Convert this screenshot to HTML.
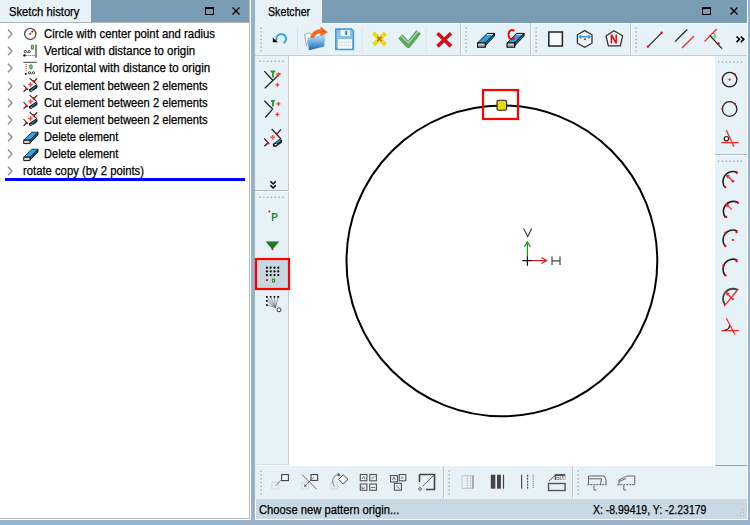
<!DOCTYPE html>
<html><head><meta charset="utf-8">
<style>
*{margin:0;padding:0;box-sizing:border-box}
html,body{width:750px;height:525px;overflow:hidden;background:#96b3c9;font-family:"Liberation Sans",sans-serif;font-size:12px;color:#000}
.a{position:absolute}
.tr{transform:scaleX(0.95)}
.t{position:absolute;white-space:nowrap;transform-origin:0 0;line-height:14px;-webkit-text-stroke:0.25px #000}
svg{position:absolute;overflow:visible}
</style></head><body>

<!-- LEFT PANEL -->
<div class="a" style="left:0;top:0;width:251px;height:520px;background:#fbfdfe"></div>
<div class="a" style="left:0;top:0;width:250px;height:519px;background:#fff;border-right:1px solid #bdb9ba;border-bottom:1px solid #bdb9ba"></div>
<div class="a" style="left:0;top:0;width:249px;height:23px;background:#7a9db5"></div>
<div class="a" style="left:0;top:0;width:91px;height:23px;background:#e6f1f8"></div>
<div class="a" style="left:0;top:22px;width:249px;height:1px;background:#a9b4bb"></div>
<div class="t" style="left:9px;top:5px;transform:scaleX(0.935)">Sketch history</div>
<!-- max / close -->
<div class="a" style="left:205px;top:7px;width:9px;height:8px;border:1px solid #000;border-top-width:2px"></div>
<svg style="left:232px;top:7px" width="8" height="8"><path d="M0.5 0.5L7.5 7.5M7.5 0.5L0.5 7.5" stroke="#000" stroke-width="1.3"/></svg>

<!-- tree -->
<svg style="left:7px;top:29.0px" width="6" height="10"><path d="M1 0.8L5 5L1 9.2" fill="none" stroke="#8a8a8a" stroke-width="1.3"/></svg>
<div class="t" style="left:44px;top:27.0px;transform:scaleX(0.946)">Circle with center point and radius</div>
<svg style="left:7px;top:46.2px" width="6" height="10"><path d="M1 0.8L5 5L1 9.2" fill="none" stroke="#8a8a8a" stroke-width="1.3"/></svg>
<div class="t" style="left:44px;top:44.2px;transform:scaleX(0.956)">Vertical with distance to origin</div>
<svg style="left:7px;top:63.3px" width="6" height="10"><path d="M1 0.8L5 5L1 9.2" fill="none" stroke="#8a8a8a" stroke-width="1.3"/></svg>
<div class="t" style="left:44px;top:61.3px;transform:scaleX(0.962)">Horizontal with distance to origin</div>
<svg style="left:7px;top:80.5px" width="6" height="10"><path d="M1 0.8L5 5L1 9.2" fill="none" stroke="#8a8a8a" stroke-width="1.3"/></svg>
<div class="t" style="left:44px;top:78.5px;transform:scaleX(0.933)">Cut element between 2 elements</div>
<svg style="left:7px;top:97.7px" width="6" height="10"><path d="M1 0.8L5 5L1 9.2" fill="none" stroke="#8a8a8a" stroke-width="1.3"/></svg>
<div class="t" style="left:44px;top:95.7px;transform:scaleX(0.933)">Cut element between 2 elements</div>
<svg style="left:7px;top:114.9px" width="6" height="10"><path d="M1 0.8L5 5L1 9.2" fill="none" stroke="#8a8a8a" stroke-width="1.3"/></svg>
<div class="t" style="left:44px;top:112.9px;transform:scaleX(0.933)">Cut element between 2 elements</div>
<svg style="left:7px;top:132.0px" width="6" height="10"><path d="M1 0.8L5 5L1 9.2" fill="none" stroke="#8a8a8a" stroke-width="1.3"/></svg>
<div class="t" style="left:44px;top:130.0px;transform:scaleX(0.921)">Delete element</div>
<svg style="left:7px;top:149.2px" width="6" height="10"><path d="M1 0.8L5 5L1 9.2" fill="none" stroke="#8a8a8a" stroke-width="1.3"/></svg>
<div class="t" style="left:44px;top:147.2px;transform:scaleX(0.921)">Delete element</div>
<svg style="left:7px;top:166.4px" width="6" height="10"><path d="M1 0.8L5 5L1 9.2" fill="none" stroke="#8a8a8a" stroke-width="1.3"/></svg>
<div class="t" style="left:23px;top:164.4px;transform:scaleX(0.940)">rotate copy (by 2 points)</div>
<svg style="left:22px;top:26px" width="16" height="16"><circle cx="8.3" cy="7.9" r="5.6" fill="none" stroke="#4a4a4a" stroke-width="1.3"/><path d="M7.5 8.5L12.3 3.6" stroke="#f00" stroke-width="1.6" stroke-dasharray="2 1"/></svg>
<svg style="left:22px;top:43px" width="16" height="16"><path d="M14 1.4V14.8" stroke="#777" stroke-width="1.7"/><ellipse cx="10.4" cy="4.2" rx="1.0" ry="1.9" fill="none" stroke="#2ea02e" stroke-width="1.4"/><circle cx="3.3" cy="8.6" r="1.1" fill="none" stroke="#333" stroke-width="1"/><circle cx="7.3" cy="8.6" r="1.1" fill="none" stroke="#333" stroke-width="1"/><circle cx="5.3" cy="9.6" r="0.5" fill="#333"/><circle cx="2.5" cy="12.4" r="1.2" fill="#000"/><path d="M4.2 12.4H13" stroke="#e33" stroke-width="1" stroke-dasharray="1.2 0.8"/></svg>
<svg style="left:22px;top:60px" width="16" height="16"><path d="M1.4 2.4H14.8" stroke="#666" stroke-width="1.3"/><path d="M4.2 4V12" stroke="#e33" stroke-width="1" stroke-dasharray="1.2 0.8"/><ellipse cx="9" cy="6.8" rx="1.1" ry="1.9" fill="none" stroke="#2ea02e" stroke-width="1.4"/><rect x="2.9" y="12.9" width="1.8" height="1.8" fill="#000"/><circle cx="7.5" cy="12.8" r="1.1" fill="none" stroke="#333" stroke-width="1"/><circle cx="11.5" cy="12.8" r="1.1" fill="none" stroke="#333" stroke-width="1"/><circle cx="9.5" cy="13.8" r="0.5" fill="#333"/></svg>
<svg style="left:22px;top:76px" width="17" height="17"><path d="M7.6 2.1L14.8 8.6M15.2 2.3L12.5 5" stroke="#222" stroke-width="1.1"/><path d="M1.5 9L6 14M1.5 15.8L4.3 13" stroke="#222" stroke-width="1.1"/><circle cx="12" cy="5.3" r="1.2" fill="#f00"/><circle cx="4.5" cy="13" r="1.2" fill="#f00"/><path d="M8.5 6.3V10.7M6.3 8.5H10.7" stroke="#f44" stroke-width="1.6"/><path d="M7 13.2L13.5 9L15.6 9.4L15.2 12L9.2 16L7.2 15.6Z" fill="#111"/><path d="M8.8 13.2L13.4 10.2L14.6 10.6L10.2 13.8Z" fill="#1a9ae0"/><path d="M8.2 14.6L10.5 14.6" stroke="#eee" stroke-width="0.7"/></svg>
<svg style="left:22px;top:93px" width="17" height="17"><path d="M7.6 2.1L14.8 8.6M15.2 2.3L12.5 5" stroke="#222" stroke-width="1.1"/><path d="M1.5 9L6 14M1.5 15.8L4.3 13" stroke="#222" stroke-width="1.1"/><circle cx="12" cy="5.3" r="1.2" fill="#f00"/><circle cx="4.5" cy="13" r="1.2" fill="#f00"/><path d="M8.5 6.3V10.7M6.3 8.5H10.7" stroke="#f44" stroke-width="1.6"/><path d="M7 13.2L13.5 9L15.6 9.4L15.2 12L9.2 16L7.2 15.6Z" fill="#111"/><path d="M8.8 13.2L13.4 10.2L14.6 10.6L10.2 13.8Z" fill="#1a9ae0"/><path d="M8.2 14.6L10.5 14.6" stroke="#eee" stroke-width="0.7"/></svg>
<svg style="left:22px;top:110px" width="17" height="17"><path d="M7.6 2.1L14.8 8.6M15.2 2.3L12.5 5" stroke="#222" stroke-width="1.1"/><path d="M1.5 9L6 14M1.5 15.8L4.3 13" stroke="#222" stroke-width="1.1"/><circle cx="12" cy="5.3" r="1.2" fill="#f00"/><circle cx="4.5" cy="13" r="1.2" fill="#f00"/><path d="M8.5 6.3V10.7M6.3 8.5H10.7" stroke="#f44" stroke-width="1.6"/><path d="M7 13.2L13.5 9L15.6 9.4L15.2 12L9.2 16L7.2 15.6Z" fill="#111"/><path d="M8.8 13.2L13.4 10.2L14.6 10.6L10.2 13.8Z" fill="#1a9ae0"/><path d="M8.2 14.6L10.5 14.6" stroke="#eee" stroke-width="0.7"/></svg>
<svg style="left:22px;top:130px" width="17" height="17"><path d="M9.7 2.2H16L8 10.2H1.7Z" fill="#2aa9e6" stroke="#111" stroke-width="0.8"/><path d="M16 2.2V5L8.2 12.8V10.2Z" fill="#1a4f9a" stroke="#111" stroke-width="0.8"/><path d="M1.7 10.2H8V13.6H1.7Z" fill="#d8d8d8" stroke="#111" stroke-width="1"/></svg>
<svg style="left:22px;top:147px" width="17" height="17"><path d="M9.7 2.2H16L8 10.2H1.7Z" fill="#2aa9e6" stroke="#111" stroke-width="0.8"/><path d="M16 2.2V5L8.2 12.8V10.2Z" fill="#1a4f9a" stroke="#111" stroke-width="0.8"/><path d="M1.7 10.2H8V13.6H1.7Z" fill="#d8d8d8" stroke="#111" stroke-width="1"/></svg>
<div class="a" style="left:5px;top:178px;width:240px;height:3px;background:#0000ff"></div>

<!-- RIGHT PANEL base -->
<div class="a" style="left:255px;top:0;width:493px;height:520px;background:#fbfdfe"></div>
<div class="a" style="left:255px;top:0;width:492px;height:23px;background:#7a9db5"></div>
<div class="a" style="left:255px;top:0;width:67px;height:23px;background:#e6f1f8"></div>
<div class="t" style="left:268px;top:5px;transform:scaleX(0.89)">Sketcher</div>
<div class="a" style="left:702px;top:7px;width:9px;height:8px;border:1px solid #000;border-top-width:2px"></div>
<svg style="left:730px;top:7px" width="8" height="8"><path d="M0.5 0.5L7.5 7.5M7.5 0.5L0.5 7.5" stroke="#000" stroke-width="1.3"/></svg>

<!-- toolbar -->
<div class="a" style="left:255px;top:23px;width:492px;height:32px;background:#e6f1f8"></div>
<div class="a" style="left:322px;top:23px;width:425px;height:1px;background:#f8fbfd"></div>
<div class="a" style="left:255px;top:55px;width:492px;height:1px;background:#c3ced6"></div>

<!-- top toolbar icons -->
<svg style="left:0;top:0" width="750" height="525">
<!-- grips -->
<g fill="#96a3ae">
<rect x="260.5" y="27.5" width="1.3" height="1.3"/><rect x="260.5" y="31.3" width="1.3" height="1.3"/><rect x="260.5" y="35.1" width="1.3" height="1.3"/><rect x="260.5" y="38.9" width="1.3" height="1.3"/><rect x="260.5" y="42.7" width="1.3" height="1.3"/><rect x="260.5" y="46.5" width="1.3" height="1.3"/><rect x="260.5" y="50.3" width="1.3" height="1.3"/>
</g>
<!-- undo -->
<path d="M276.7 40.5A4.8 4.8 0 1 1 283.6 43.1" fill="none" stroke="#2a9ee0" stroke-width="1.9"/>
<path d="M272.8 37.4L277.9 42.2H272.8Z" fill="#000"/>
<path d="M297.5 28V51" stroke="#d8e0e6" stroke-width="1"/>
<!-- open folder -->
<defs><linearGradient id="fg" x1="0" y1="0" x2="0" y2="1"><stop offset="0" stop-color="#c4e0f4"/><stop offset="0.45" stop-color="#6db3e4"/><stop offset="1" stop-color="#2262b0"/></linearGradient></defs>
<path d="M304.5 34.5L309 32.8L312.5 34.5L313 38L308.5 39L306.5 46Z" fill="#f6f8fa" stroke="#98a4ae" stroke-width="0.9"/>
<path d="M307.5 38.5L325.5 34.8L324.2 46.5L309 50.2Z" fill="url(#fg)"/>
<path d="M307.5 38.5L325.5 34.8" stroke="#9cc8ea" stroke-width="0.8"/>
<path d="M312 38Q313.5 31.5 321.5 31" fill="none" stroke="#f26b1d" stroke-width="4"/>
<path d="M320.5 26.5L327.8 32.2L320.5 36.2Z" fill="#f26b1d"/>
<circle cx="323.5" cy="31.5" r="0.6" fill="#e00"/>
<!-- save -->
<path d="M335 28.3H351.8L354.2 30.7V50.2H335Z" fill="#4b9ad4"/>
<path d="M336.6 29.9H351.2L352.6 31.3V48.6H336.6Z" fill="#86c0e8"/>
<rect x="340.6" y="29.9" width="9.4" height="6" fill="#f4f7fa"/>
<rect x="345.2" y="30.8" width="2" height="4.2" fill="#3a7fc0"/>
<rect x="337.8" y="39.2" width="14.2" height="9.4" fill="#f6f8fb"/>
<path d="M338.8 42.2H351M338.8 45.2H351" stroke="#b0bcc6" stroke-width="0.8" stroke-dasharray="1.2 0.6"/>
<path d="M362 28V51" stroke="#d8e0e6" stroke-width="1"/>
<!-- yellow x -->
<path d="M373.5 33L385.5 45M385.5 33L373.5 45" stroke="#ecd81a" stroke-width="4"/>
<path d="M377.5 37L381.5 41M381.5 37L377.5 41" stroke="#b06a20" stroke-width="1.6"/>
<!-- green check -->
<path d="M400.5 36.5L408.3 45L418.5 32" fill="none" stroke="#7a8e84" stroke-width="5.8" stroke-linejoin="round"/>
<path d="M400.5 36.5L408.3 45L418.5 32" fill="none" stroke="#4caf50" stroke-width="4.2" stroke-linejoin="round"/>
<path d="M400.5 35.5L408.3 43L418 31.5" fill="none" stroke="#a8d8a0" stroke-width="1.4"/>
<path d="M426 28V51" stroke="#d8e0e6" stroke-width="1"/>
<!-- red x -->
<path d="M437.5 33.2L451 46.4M451 33.2L437.5 46.4" stroke="#c8161c" stroke-width="3.6"/>
<!-- section boundary -->
<path d="M460.5 23V55" stroke="#b9c4cc" stroke-width="1"/><path d="M461.5 23V55" stroke="#ffffff" stroke-width="1"/>
<g fill="#96a3ae">
<rect x="465.5" y="27.5" width="1.3" height="1.3"/><rect x="465.5" y="31.3" width="1.3" height="1.3"/><rect x="465.5" y="35.1" width="1.3" height="1.3"/><rect x="465.5" y="38.9" width="1.3" height="1.3"/><rect x="465.5" y="42.7" width="1.3" height="1.3"/><rect x="465.5" y="46.5" width="1.3" height="1.3"/><rect x="465.5" y="50.3" width="1.3" height="1.3"/>
</g>
<!-- eraser -->
<g>
<path d="M487.2 33.4H494.6L485 43H477.6Z" fill="#27a3e3" stroke="#000" stroke-width="0.9"/>
<path d="M486.8 34.6H493" stroke="#e8f6fd" stroke-width="0.9"/>
<path d="M494.6 33.4V36L485.4 45.6V43Z" fill="#1a6fb0" stroke="#000" stroke-width="0.9"/>
<path d="M477.6 43H485.2V47.2H477.6Z" fill="#fbfbfb" stroke="#000" stroke-width="1.2"/>
<path d="M478.4 45.2H484.4" stroke="#555" stroke-width="0.8"/>
</g>
<g transform="translate(29.5 0)">
<path d="M487.2 33.4H494.6L485 43H477.6Z" fill="#27a3e3" stroke="#000" stroke-width="0.9"/>
<path d="M486.8 34.6H493" stroke="#e8f6fd" stroke-width="0.9"/>
<path d="M494.6 33.4V36L485.4 45.6V43Z" fill="#1a6fb0" stroke="#000" stroke-width="0.9"/>
<path d="M477.6 43H485.2V47.2H477.6Z" fill="#fbfbfb" stroke="#000" stroke-width="1.2"/>
<path d="M478.4 45.2H484.4" stroke="#555" stroke-width="0.8"/>
</g>
<path d="M514.2 31.2Q512.8 29.8 511.2 30.1Q508.6 30.8 508.6 34.6Q508.6 38.6 511.4 39.1Q513 39.3 514.4 38" fill="none" stroke="#f00" stroke-width="1.9"/>
<!-- section boundary -->
<path d="M530.5 23V55" stroke="#b9c4cc" stroke-width="1"/><path d="M531.5 23V55" stroke="#ffffff" stroke-width="1"/>
<g fill="#96a3ae">
<rect x="535.5" y="27.5" width="1.3" height="1.3"/><rect x="535.5" y="31.3" width="1.3" height="1.3"/><rect x="535.5" y="35.1" width="1.3" height="1.3"/><rect x="535.5" y="38.9" width="1.3" height="1.3"/><rect x="535.5" y="42.7" width="1.3" height="1.3"/><rect x="535.5" y="46.5" width="1.3" height="1.3"/><rect x="535.5" y="50.3" width="1.3" height="1.3"/>
</g>
<!-- square -->
<rect x="548.8" y="32" width="13.6" height="14" fill="#f4f8fb" stroke="#222" stroke-width="1.5"/>
<!-- hexagon -->
<path d="M584.7 30.6L592 34.8V43.2L584.7 47.2L577.4 43.2V34.8Z" fill="#eef4f8" stroke="#333" stroke-width="1.3"/>
<path d="M579.5 36.8H590" stroke="#2aa0e6" stroke-width="1.5"/>
<path d="M578.2 36.8L581.2 34.6V39Z M591.2 36.8L588.2 34.6V39Z" fill="#2aa0e6"/>
<circle cx="585" cy="39.3" r="1" fill="#f00"/>
<!-- pentagon -->
<path d="M614 30.8L622.6 35.8L620.4 45.8H608.4L606 36Z" fill="#f4f8fb" stroke="#333" stroke-width="1.3"/>
<path d="M611.4 43.4V34.6L616.2 43.4V34.6" fill="none" stroke="#f00" stroke-width="1.5"/>
<!-- section boundary -->
<path d="M630.5 23V55" stroke="#b9c4cc" stroke-width="1"/><path d="M631.5 23V55" stroke="#ffffff" stroke-width="1"/>
<g fill="#96a3ae">
<rect x="635.5" y="27.5" width="1.3" height="1.3"/><rect x="635.5" y="31.3" width="1.3" height="1.3"/><rect x="635.5" y="35.1" width="1.3" height="1.3"/><rect x="635.5" y="38.9" width="1.3" height="1.3"/><rect x="635.5" y="42.7" width="1.3" height="1.3"/><rect x="635.5" y="46.5" width="1.3" height="1.3"/><rect x="635.5" y="50.3" width="1.3" height="1.3"/>
</g>
<!-- lines -->
<path d="M648 46.6L661.6 32.8" stroke="#222" stroke-width="1.2"/>
<circle cx="648" cy="46.6" r="1.2" fill="#f00"/><circle cx="661.6" cy="32.8" r="1.2" fill="#f00"/>
<path d="M675 41.6L687.2 29.5" stroke="#222" stroke-width="1.3"/>
<path d="M682 48L694 36" stroke="#f22" stroke-width="1.3"/>
<path d="M704.4 41.6L716.7 29" stroke="#f22" stroke-width="1.3"/>
<path d="M710 35.6L722 48.6" stroke="#222" stroke-width="1.3"/>
<path d="M712 33.5A2.6 2.6 0 0 1 713.5 38.5" fill="none" stroke="#2a2" stroke-width="1"/>
<circle cx="713" cy="36.3" r="0.6" fill="#2a2"/>
<circle cx="718.5" cy="43.5" r="1.2" fill="#f00"/>
<!-- chevron -->
<path d="M736.5 36.5L739.5 39.3L736.5 42.1M740.8 36.5L743.8 39.3L740.8 42.1" fill="none" stroke="#000" stroke-width="1.6"/>
</svg>

<!-- left column -->
<div class="a" style="left:255px;top:56px;width:34px;height:409px;background:#e6f1f8;border-right:1px solid #c3ced6;border-bottom:1px solid #d5dde3"></div>
<!-- canvas -->
<div class="a" style="left:289px;top:56px;width:426px;height:410px;background:#fff"></div>
<!-- right column -->
<div class="a" style="left:715px;top:56px;width:32px;height:410px;background:#e6f1f8;border-bottom:1px solid #9aa4ab"></div>
<!-- bottom toolbar -->
<div class="a" style="left:255px;top:466px;width:492px;height:33px;background:#e6f1f8"></div>
<!-- status bar -->
<div class="a" style="left:256px;top:499px;width:491px;height:20px;background:#c9d9e3"></div>
<div class="t" style="left:259px;top:503px;transform:scaleX(0.935)">Choose new pattern origin...</div>
<div class="t" style="left:593px;top:503px;transform:scaleX(0.873)">X: -8.99419, Y: -2.23179</div>

<!-- left col icons -->
<svg style="left:0;top:0" width="750" height="525">
<g fill="#96a3ae">
<rect x="259.5" y="60.7" width="1.3" height="1.3"/><rect x="263.3" y="60.7" width="1.3" height="1.3"/><rect x="267.1" y="60.7" width="1.3" height="1.3"/><rect x="270.9" y="60.7" width="1.3" height="1.3"/><rect x="274.7" y="60.7" width="1.3" height="1.3"/><rect x="278.5" y="60.7" width="1.3" height="1.3"/><rect x="282.3" y="60.7" width="1.3" height="1.3"/>
</g>
<!-- trim 1 -->
<path d="M264.3 71.1L272.8 80.2M264.8 88.2L280.3 73.4" stroke="#222" stroke-width="1.3"/>
<path d="M270.5 71.5H275.3M272.9 71.5V77.5" stroke="#2a9a2a" stroke-width="1.8"/>
<path d="M278.3 72.5V76.5M276.3 74.5H280.3M277.4 82.8V86.8M275.4 84.8H279.4" stroke="#f33" stroke-width="1.3"/>
<!-- trim 2 -->
<path d="M264.3 100.8L272.7 109.1L265.3 117.5" fill="none" stroke="#222" stroke-width="1.3"/>
<path d="M272.7 109.1L280.5 117.5" stroke="#c0c8cc" stroke-width="0.8" stroke-dasharray="1.5 1"/>
<path d="M271 100.8H275M273 100.8V106.5" stroke="#2a9a2a" stroke-width="1.8"/>
<path d="M278.4 101.9V105.9M276.4 103.9H280.4M277.4 112.4V116.4M275.4 114.4H279.4" stroke="#f33" stroke-width="1.3"/>
<!-- cut -->
<path d="M271.6 129L281 139M281 129.5L276.9 133.8" stroke="#222" stroke-width="1.2"/>
<path d="M264.3 138.5L268.5 143.2M264.3 146.3L268 142.7" stroke="#222" stroke-width="1.2"/>
<circle cx="276.9" cy="133.8" r="1.3" fill="#f00"/><circle cx="268" cy="143.2" r="1.3" fill="#f00"/>
<path d="M272.7 135V139.8M270.3 137.4H275.1" stroke="#f55" stroke-width="1.6"/>
<path d="M272.8 144L279.5 139L282.2 140L281.8 142.8L275.5 147L273 146.4Z" fill="#111"/>
<path d="M275.3 142.6L279.6 139.9L281 140.8L277 143.6Z" fill="#1a9ae0"/>
<path d="M274.3 144.6L276.2 143.4L277.2 144.2L275.2 145.6Z" fill="#eee"/>
<!-- chevron down -->
<path d="M270.4 181.3L273.1 184L275.8 181.3M270.4 185.3L273.1 188L275.8 185.3" fill="none" stroke="#000" stroke-width="1.5"/>
<!-- separator -->
<path d="M255 190.5H289" stroke="#b0bac2" stroke-width="1"/><path d="M255 191.5H289" stroke="#fff" stroke-width="1"/>
<g fill="#96a3ae">
<rect x="259.5" y="196.7" width="1.3" height="1.3"/><rect x="263.3" y="196.7" width="1.3" height="1.3"/><rect x="267.1" y="196.7" width="1.3" height="1.3"/><rect x="270.9" y="196.7" width="1.3" height="1.3"/><rect x="274.7" y="196.7" width="1.3" height="1.3"/><rect x="278.5" y="196.7" width="1.3" height="1.3"/><rect x="282.3" y="196.7" width="1.3" height="1.3"/>
</g>
<!-- P -->
<circle cx="269.4" cy="211.6" r="1" fill="#f00"/>
<path d="M272.6 221V213.8H275.3A1.8 1.8 0 0 1 275.3 217.4H272.6" fill="none" stroke="#2a8a2a" stroke-width="1.4"/>
<!-- triangle -->
<path d="M265.6 241.5H279.3L272.4 249.5Z" fill="#1b7a1b"/>
<circle cx="272.4" cy="249" r="1" fill="#f00"/>
<!-- grid button -->
<rect x="256.5" y="259.5" width="32" height="29" fill="#c8d6df"/>
<rect x="256" y="259" width="33" height="30" fill="none" stroke="#ff0000" stroke-width="2.2"/>
<g fill="#000">
<circle cx="266.9" cy="267.7" r="1.1"/><circle cx="270.7" cy="267.7" r="1.1"/><circle cx="274.5" cy="267.7" r="1.1"/><circle cx="278.3" cy="267.7" r="1.1"/>
<circle cx="266.9" cy="271.4" r="1.1"/><circle cx="270.7" cy="271.4" r="1.1"/><circle cx="274.5" cy="271.4" r="1.1"/><circle cx="278.3" cy="271.4" r="1.1"/>
<circle cx="266.9" cy="275.1" r="1.1"/><circle cx="270.7" cy="275.1" r="1.1"/><circle cx="274.5" cy="275.1" r="1.1"/><circle cx="278.3" cy="275.1" r="1.1"/>
</g>
<rect x="266" y="279.2" width="1.8" height="1.8" fill="#f00"/>
<ellipse cx="273.5" cy="280.5" rx="1.2" ry="1.7" fill="none" stroke="#1a9a1a" stroke-width="1.2"/>
<!-- pattern icon -->
<g fill="#000">
<rect x="266" y="296" width="1.7" height="1.7"/><rect x="269.8" y="296" width="1.7" height="1.7"/><rect x="273.6" y="296" width="1.7" height="1.7"/><rect x="277.4" y="296" width="1.7" height="1.7"/>
<rect x="266" y="300" width="1.7" height="1.7"/><rect x="266" y="304.2" width="1.7" height="1.7"/>
</g>
<path d="M267 297L275.5 307.5M270.6 297L275.5 307.5M274.4 297L275.5 307.5M278.2 297L275.5 307.5M267 301L275.5 307.5M267 305L275.5 307.5" stroke="#555" stroke-width="0.6"/>
<circle cx="275.5" cy="307.5" r="0.8" fill="#2a2"/>
<circle cx="279" cy="309.8" r="2" fill="#fff" stroke="#333" stroke-width="1"/>
</svg>

<!-- rest icons -->
<svg style="left:0;top:0" width="750" height="525">
<!-- canvas -->
<circle cx="501.9" cy="260.9" r="155.4" fill="none" stroke="#000" stroke-width="2"/>
<rect x="483" y="90" width="35" height="29" fill="none" stroke="#ff0000" stroke-width="2.2"/>
<rect x="497" y="100.3" width="9.6" height="10" rx="1.5" fill="#e6d816" stroke="#222" stroke-width="1.1"/>
<!-- origin -->
<path d="M522.3 260.6H532.5M527.4 256V265.7" stroke="#111" stroke-width="1.2"/>
<path d="M527.4 256.5V242" stroke="#1a9a1a" stroke-width="1.2"/>
<path d="M524.3 247L527.4 242L530.5 247" fill="none" stroke="#1a9a1a" stroke-width="1.2"/>
<path d="M532.5 260.6H546.5" stroke="#e01818" stroke-width="1.2"/>
<path d="M541.5 257.6L546.5 260.6L541.5 263.6" fill="none" stroke="#e01818" stroke-width="1.2"/>
<path d="M523.6 228.4L527.7 236.6L531.8 228.4" fill="none" stroke="#333" stroke-width="1.1"/>
<path d="M552 256.6V265M560 256.6V265M552 260.8H560" fill="none" stroke="#444" stroke-width="1.2"/>

<!-- right column -->
<g fill="#96a3ae">
<rect x="718" y="61.3" width="1.3" height="1.3"/><rect x="721.8" y="61.3" width="1.3" height="1.3"/><rect x="725.6" y="61.3" width="1.3" height="1.3"/><rect x="729.4" y="61.3" width="1.3" height="1.3"/><rect x="733.2" y="61.3" width="1.3" height="1.3"/><rect x="737" y="61.3" width="1.3" height="1.3"/><rect x="740.8" y="61.3" width="1.3" height="1.3"/>
</g>
<circle cx="729.6" cy="79.6" r="7.3" fill="none" stroke="#222" stroke-width="1.3"/>
<circle cx="729.6" cy="79.6" r="1.1" fill="#f00"/><circle cx="734.8" cy="74.4" r="1.1" fill="#f00"/>
<circle cx="729.6" cy="109" r="7.3" fill="none" stroke="#222" stroke-width="1.3"/>
<circle cx="722.4" cy="109" r="1.1" fill="#f00"/><circle cx="735.2" cy="104" r="1.1" fill="#f00"/>
<path d="M721.3 142.6H738.5M726.2 130L734 146.7" stroke="#f22" stroke-width="1.2"/>
<circle cx="726.4" cy="138.7" r="2.2" fill="#fff" stroke="#222" stroke-width="1.2"/>
<path d="M715 154.5H747" stroke="#b0bac2" stroke-width="1"/><path d="M715 155.5H747" stroke="#fff" stroke-width="1"/>
<g fill="#96a3ae">
<rect x="718" y="160.5" width="1.3" height="1.3"/><rect x="721.8" y="160.5" width="1.3" height="1.3"/><rect x="725.6" y="160.5" width="1.3" height="1.3"/><rect x="729.4" y="160.5" width="1.3" height="1.3"/><rect x="733.2" y="160.5" width="1.3" height="1.3"/><rect x="737" y="160.5" width="1.3" height="1.3"/><rect x="740.8" y="160.5" width="1.3" height="1.3"/>
</g>
<!-- arc1 -->
<path d="M725.0 187.6A10 10 0 0 1 737.2 172.5" fill="none" stroke="#222" stroke-width="1.6"/>
<circle cx="725.2" cy="187.1" r="1.2" fill="#f00"/><circle cx="736.8" cy="172.7" r="1.2" fill="#f00"/><circle cx="732.9" cy="181.2" r="1.2" fill="#f00"/>
<path d="M732.9 181.2L727 175.5" stroke="#f22" stroke-width="1.2"/><path d="M725.8 174.3L730 175.6L727.2 178.4Z" fill="#f22"/>
<!-- arc2 -->
<path d="M725.4 217.4A10 10 0 0 1 737.6 202.3" fill="none" stroke="#222" stroke-width="1.6"/>
<circle cx="726.1" cy="216.9" r="1.2" fill="#f00"/><circle cx="737.8" cy="202.8" r="1.2" fill="#f00"/>
<path d="M731.8 209.6L726.6 204.6" stroke="#f22" stroke-width="1.2"/><path d="M725.3 203.5L729.5 204.8L726.7 207.6Z" fill="#f22"/>
<!-- arc3 -->
<path d="M725.0 246.0A10 10 0 0 1 737.2 230.9" fill="none" stroke="#222" stroke-width="1.6"/>
<circle cx="725.3" cy="246" r="1.2" fill="#f00"/><circle cx="736.6" cy="232" r="1.2" fill="#f00"/><circle cx="725.5" cy="232.8" r="1.2" fill="#f00"/><circle cx="732.9" cy="240" r="1.1" fill="#f00"/>
<!-- arc4 -->
<path d="M725.0 275.2A10 10 0 0 1 737.2 260.1" fill="none" stroke="#222" stroke-width="1.6"/>
<circle cx="725.3" cy="275.2" r="1.2" fill="#f00"/><circle cx="736.6" cy="261" r="1.2" fill="#f00"/><circle cx="723.6" cy="265.5" r="1.2" fill="#f00"/>
<!-- arc5 -->
<path d="M725.0 304.8A10 10 0 0 1 737.2 289.7" fill="none" stroke="#444" stroke-width="1.9"/>
<path d="M738.3 289L724.1 306.3" stroke="#f22" stroke-width="1.2"/>
<circle cx="732.8" cy="299" r="1.1" fill="#f00"/>
<path d="M732.8 299L726.8 293.2" stroke="#f22" stroke-width="1.2"/><path d="M725.6 292L729.8 293.3L727 296.1Z" fill="#f22"/>
<!-- tangent2 -->
<path d="M721.4 330.6H738.8M726.3 318.3L735 334.6" stroke="#f22" stroke-width="1.2"/>
<path d="M724.5 330.2Q729 330 729.6 325.5" fill="none" stroke="#222" stroke-width="1.3"/>

<!-- bottom toolbar -->
<g fill="#96a3ae">
<rect x="260.5" y="470.5" width="1.3" height="1.3"/><rect x="260.5" y="474.3" width="1.3" height="1.3"/><rect x="260.5" y="478.1" width="1.3" height="1.3"/><rect x="260.5" y="481.9" width="1.3" height="1.3"/><rect x="260.5" y="485.7" width="1.3" height="1.3"/><rect x="260.5" y="489.5" width="1.3" height="1.3"/><rect x="260.5" y="493.3" width="1.3" height="1.3"/>
</g>
<rect x="271.8" y="482.4" width="6.6" height="6.6" fill="none" stroke="#d4d8dc" stroke-width="1"/>
<rect x="281.6" y="474.6" width="6.8" height="6" fill="#f6f8fa" stroke="#444" stroke-width="1.1"/>
<path d="M275.5 486L281.5 479.5" stroke="#777" stroke-width="0.9"/>
<path d="M302.2 474.7L316.7 489.3" stroke="#555" stroke-width="0.9"/>
<rect x="301.9" y="482.4" width="6.6" height="6.6" fill="none" stroke="#d4d8dc" stroke-width="1"/>
<rect x="311" y="474.6" width="6.6" height="5.8" fill="#f6f8fa" stroke="#444" stroke-width="1.1"/>
<path d="M314 477L304.8 486" stroke="#666" stroke-width="0.9"/><path d="M304 487L304.6 484L307 486.2Z" fill="#666"/>
<rect x="331" y="482.4" width="6.4" height="6.6" fill="none" stroke="#d4d8dc" stroke-width="1"/>
<path d="M334.6 486.5A7.5 7.5 0 0 1 338.5 474" fill="none" stroke="#777" stroke-width="0.9"/>
<path d="M338 472.5L341 475.5L337.5 476.5Z" fill="#666"/>
<path d="M343.2 474.8L348 479.4L343.2 484L338.6 479.4Z" fill="#f6f8fa" stroke="#444" stroke-width="1"/>
<g fill="none" stroke="#555" stroke-width="1.1">
<rect x="360.3" y="474.5" width="6.6" height="6.3"/><rect x="369.8" y="474.5" width="6.6" height="6.3"/>
<rect x="360.3" y="484" width="6.6" height="6.3"/><rect x="369.8" y="484" width="6.6" height="6.3"/>
<rect x="390.5" y="475.6" width="7" height="6.3"/><rect x="399.2" y="474.5" width="6.6" height="6.3"/>
<rect x="394.4" y="483.4" width="7" height="6.8"/>
</g>
<path d="M362 479L363.6 476.5L365.2 479M371.5 479L374.5 476.5M362 486V489L365 487.5M371 487.5H375M392.5 480L394 477L395.5 480M401 478.5L403.5 476.8M396 485.5L399.5 488.8" fill="none" stroke="#666" stroke-width="0.9"/>
<path d="M419.5 474.5H434.5V489.5H426M419.5 474.5V482" fill="none" stroke="#444" stroke-width="1.6"/>
<path d="M422.5 486.5L434 475" stroke="#666" stroke-width="1"/>
<path d="M419.5 483.5V489.5H426" fill="none" stroke="#d0d4d8" stroke-width="1" stroke-dasharray="1.5 1"/>
<circle cx="420" cy="489" r="1.3" fill="#fff" stroke="#555" stroke-width="0.9"/>
<path d="M443.5 466V498" stroke="#b9c4cc" stroke-width="1"/><path d="M444.5 466V498" stroke="#fff" stroke-width="1"/>
<g fill="#96a3ae">
<rect x="448.5" y="470.5" width="1.3" height="1.3"/><rect x="448.5" y="474.3" width="1.3" height="1.3"/><rect x="448.5" y="478.1" width="1.3" height="1.3"/><rect x="448.5" y="481.9" width="1.3" height="1.3"/><rect x="448.5" y="485.7" width="1.3" height="1.3"/><rect x="448.5" y="489.5" width="1.3" height="1.3"/><rect x="448.5" y="493.3" width="1.3" height="1.3"/>
</g>
<path d="M462 475.5H473V488.5H462Z" fill="none" stroke="#c8ccd0" stroke-width="1"/>
<path d="M467.3 476V488M470.7 476V488" stroke="#999" stroke-width="0.8" stroke-dasharray="1.2 1"/>
<path d="M473 475.5V488.5" stroke="#777" stroke-width="1"/>
<rect x="490.8" y="474.7" width="4.5" height="14" fill="#444"/>
<rect x="497" y="474.7" width="3.9" height="14" fill="#444"/>
<rect x="502.9" y="474.7" width="1.2" height="14" fill="#444"/>
<path d="M521.6 474.7V488.7" stroke="#555" stroke-width="1.2"/>
<path d="M527.6 474.7V488.7" stroke="#555" stroke-width="1.2" stroke-dasharray="2 1"/>
<path d="M533.2 474.7V488.7" stroke="#777" stroke-width="1.2" stroke-dasharray="1 1"/>
<rect x="548.5" y="483.5" width="16.6" height="7" fill="none" stroke="#555" stroke-width="1.4"/>
<rect x="554.7" y="474" width="10.6" height="6" fill="#555"/>
<text x="556" y="479.6" font-family="Liberation Sans" font-size="6" font-weight="bold" fill="#fff">RM</text>
<path d="M549 481L555 475.5" stroke="#555" stroke-width="1"/>
<path d="M572.5 466V498" stroke="#b9c4cc" stroke-width="1"/><path d="M573.5 466V498" stroke="#fff" stroke-width="1"/>
<g fill="#96a3ae">
<rect x="577.5" y="470.5" width="1.3" height="1.3"/><rect x="577.5" y="474.3" width="1.3" height="1.3"/><rect x="577.5" y="478.1" width="1.3" height="1.3"/><rect x="577.5" y="481.9" width="1.3" height="1.3"/><rect x="577.5" y="485.7" width="1.3" height="1.3"/><rect x="577.5" y="489.5" width="1.3" height="1.3"/><rect x="577.5" y="493.3" width="1.3" height="1.3"/>
</g>
<path d="M588.5 484.5V476H604.5L606 480V484.5M588.5 478.8H601.5L600.5 484.5" fill="none" stroke="#666" stroke-width="1"/>
<path d="M587.3 484.7H606.7" stroke="#555" stroke-width="1" stroke-dasharray="2 1"/>
<path d="M594 485.5V490H596.5" fill="none" stroke="#666" stroke-width="1"/>
<path d="M619 484.5V480L627 476H634.8V484.5M619 481.5L626 478.5" fill="none" stroke="#666" stroke-width="1"/>
<path d="M617.3 484.7H635.3" stroke="#555" stroke-width="1" stroke-dasharray="2 1"/>
<path d="M623.8 485.5V490H626.3" fill="none" stroke="#666" stroke-width="1"/>
<!-- resize grip -->
<g fill="#a9b6bf">
<rect x="743" y="509" width="1" height="1"/><rect x="740" y="512" width="1" height="1"/><rect x="743" y="512" width="1" height="1"/>
<rect x="737" y="515" width="1" height="1"/><rect x="740" y="515" width="1" height="1"/><rect x="743" y="515" width="1" height="1"/>
</g>
</svg>

</body></html>
